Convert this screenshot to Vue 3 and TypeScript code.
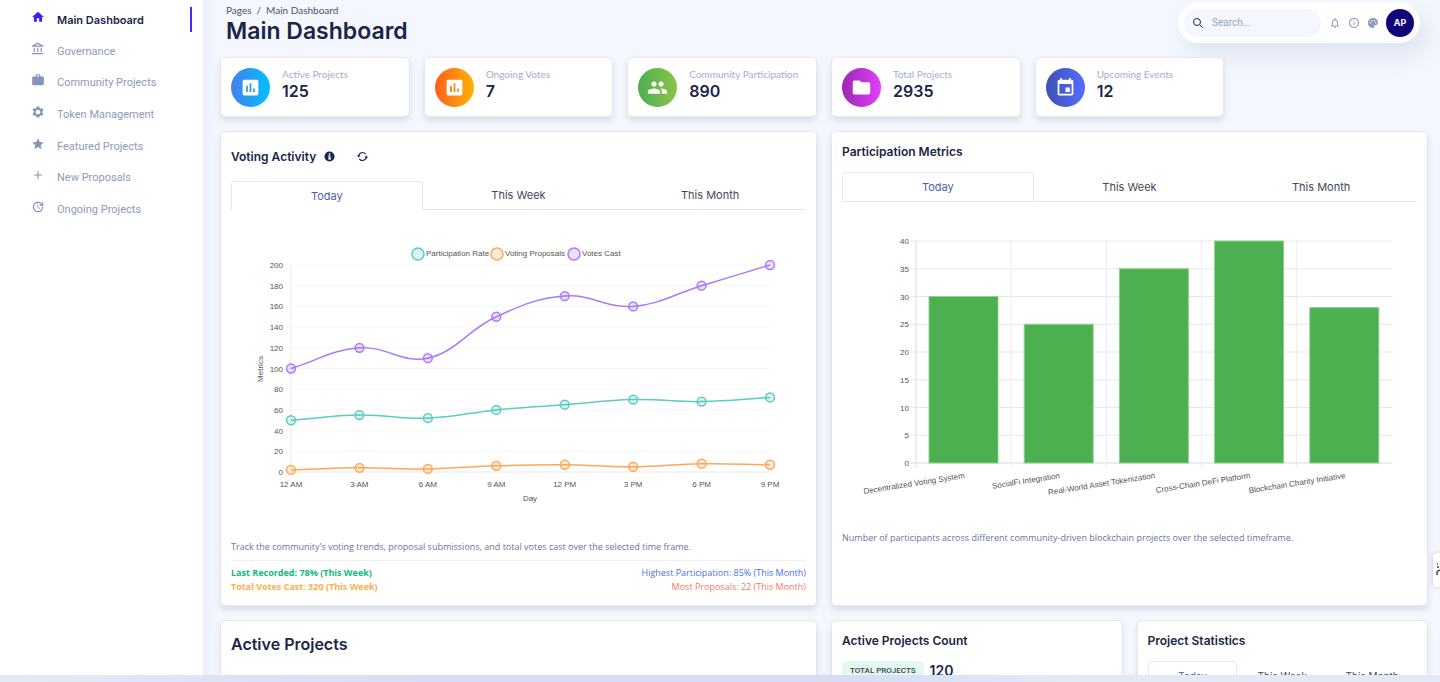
<script setup lang="ts">
import { ref } from 'vue'

interface NavItem { label: string; icon: string }
interface Stat { label: string; value: string; tone: string; icon: string }
interface Point { x: number; y: number }

const pollIcon =
  'M19 3H5c-1.1 0-2 .9-2 2v14c0 1.1.9 2 2 2h14c1.1 0 2-.9 2-2V5c0-1.1-.9-2-2-2zM9 17H7v-7h2v7zm4 0h-2V7h2v10zm4 0h-2v-4h2v4z'

const navItems: NavItem[] = [
  { label: 'Main Dashboard', icon: 'M10 20v-6h4v6h5v-8h3L12 3 2 12h3v8z' },
  { label: 'Governance', icon: 'M6.5 10h-2v7h2v-7zm6 0h-2v7h2v-7zm8.500 9H2v2h19v-2zm-2.500-9h-2v7h2v-7zm-7-6.740L16.710 6H6.290l5.210-2.740m0-2.260L2 6v2h19V6l-9.500-5z' },
  { label: 'Community Projects', icon: 'M20 6h-4V4c0-1.110-.890-2-2-2h-4c-1.110 0-2 .890-2 2v2H4c-1.110 0-1.990.890-1.990 2L2 19c0 1.110.890 2 2 2h16c1.110 0 2-.890 2-2V8c0-1.110-.890-2-2-2zm-6 0h-4V4h4v2z' },
  { label: 'Token Management', icon: 'M19.14 12.94c.04-.3.06-.61.06-.94 0-.32-.02-.64-.07-.94l2.030-1.580c.18-.14.23-.41.12-.61l-1.920-3.320c-.12-.22-.37-.29-.59-.22l-2.390.96c-.5-.38-1.030-.7-1.620-.94l-.36-2.540c-.04-.24-.24-.41-.48-.41h-3.840c-.24 0-.43.17-.47.41l-.36 2.540c-.59.24-1.130.57-1.620.94l-2.390-.96c-.22-.08-.47 0-.59.22L2.740 8.870c-.12.21-.08.47.12.61l2.030 1.580c-.05.3-.09.63-.09.94s.02.64.07.94l-2.030 1.580c-.18.14-.23.41-.12.61l1.920 3.320c.12.22.37.29.59.22l2.390-.96c.5.38 1.030.7 1.620.94l.36 2.540c.05.24.24.41.48.41h3.840c.24 0 .44-.17.47-.41l.36-2.540c.59-.24 1.130-.56 1.620-.94l2.390.96c.22.08.47 0 .59-.22l1.920-3.320c.12-.22.07-.47-.12-.61l-2.010-1.580zM12 16c-2.200 0-4-1.800-4-4s1.800-4 4-4 4 1.800 4 4-1.800 4-4 4z' },
  { label: 'Featured Projects', icon: 'M12 17.270L18.180 21l-1.640-7.030L22 9.240l-7.190-.61L12 2 9.190 8.630 2 9.240l5.460 4.730L5.820 21z' },
  { label: 'New Proposals', icon: 'M19 13h-6v6h-2v-6H5v-2h6V5h2v6h6v2z' },
  { label: 'Ongoing Projects', icon: 'M21 10.120h-6.780l2.740-2.820c-2.730-2.700-7.150-2.800-9.880-.1-2.730 2.710-2.730 7.080 0 9.790s7.150 2.710 9.880 0C18.320 15.650 19 14.080 19 12.100h2c0 1.980-.88 4.550-2.640 6.290-3.510 3.480-9.210 3.480-12.720 0-3.500-3.470-3.530-9.110-.02-12.580s9.140-3.470 12.650 0L21 3v7.120zM12.500 8v4.250l3.500 2.080-.72 1.210L11 13V8h1.500z' },
]

const stats: Stat[] = [
  { label: 'Active Projects', value: '125', tone: 'blue', icon: pollIcon },
  { label: 'Ongoing Votes', value: '7', tone: 'orange', icon: pollIcon },
  { label: 'Community Participation', value: '890', tone: 'green', icon: 'M16 11c1.660 0 2.990-1.340 2.990-3S17.660 5 16 5c-1.660 0-3 1.340-3 3s1.340 3 3 3zm-8 0c1.660 0 2.990-1.340 2.990-3S9.660 5 8 5C6.340 5 5 6.340 5 8s1.340 3 3 3zm0 2c-2.330 0-7 1.170-7 3.500V19h14v-2.500c0-2.330-4.670-3.500-7-3.500zm8 0c-.29 0-.62.02-.97.05 1.160.84 1.970 1.970 1.970 3.450V19h6v-2.500c0-2.330-4.670-3.500-7-3.500z' },
  { label: 'Total Projects', value: '2935', tone: 'purple', icon: 'M10 4H4c-1.100 0-1.990.9-1.990 2L2 18c0 1.100.9 2 2 2h16c1.100 0 2-.9 2-2V8c0-1.100-.9-2-2-2h-8l-2-2z' },
  { label: 'Upcoming Events', value: '12', tone: 'indigo', icon: 'M17 12h-5v5h5v-5zM16 1v2H8V1H6v2H5c-1.110 0-1.990.9-1.990 2L3 19c0 1.100.89 2 2 2h14c1.100 0 2-.9 2-2V5c0-1.100-.9-2-2-2h-1V1h-2zm3 18H5V8h14v11z' },
]

const tabs = ['Today', 'This Week', 'This Month']
const votingTab = ref('Today')
const metricsTab = ref('Today')
const statisticsTab = ref('Today')
const query = ref('')

// Voting activity line chart
const line = { left: 60, right: 539, top: 55, bottom: 262 }
const hours = ['12 AM', '3 AM', '6 AM', '9 AM', '12 PM', '3 PM', '6 PM', '9 PM']
const lineTicks = Array.from({ length: 11 }, (_, i) => i * 20)
const lineX = (i: number) => line.left + (i * (line.right - line.left)) / (hours.length - 1)
const lineY = (v: number) => line.bottom - (v * (line.bottom - line.top)) / 200

const series = [
  { name: 'Participation Rate', color: '#5ccbc3', fill: 'rgba(75,192,192,0.2)', legendX: 187, values: [50, 55, 52, 60, 65, 70, 68, 72] },
  { name: 'Voting Proposals', color: '#ffa755', fill: 'rgba(255,159,64,0.2)', legendX: 266, values: [2, 4, 3, 6, 7, 5, 8, 7] },
  { name: 'Votes Cast', color: '#a77bff', fill: 'rgba(153,102,255,0.2)', legendX: 343, values: [100, 120, 110, 150, 170, 160, 180, 200] },
].map((s) => {
  const points = s.values.map((v, i) => ({ x: lineX(i), y: lineY(v) }))
  return { ...s, points, path: smoothPath(points) }
})

function smoothPath(points: Point[], tension = 0.4): string {
  const handles = points.map((p, i) => {
    const prev = points[i - 1] ?? p
    const next = points[i + 1] ?? p
    const before = Math.hypot(p.x - prev.x, p.y - prev.y)
    const after = Math.hypot(next.x - p.x, next.y - p.y)
    const a = (tension * before) / (before + after)
    const b = (tension * after) / (before + after)
    const dx = next.x - prev.x
    const dy = next.y - prev.y
    return { inX: p.x - a * dx, inY: p.y - a * dy, outX: p.x + b * dx, outY: p.y + b * dy }
  })
  return points.reduce((d, p, i) => {
    if (i === 0) return `M${p.x} ${p.y}`
    const from = handles[i - 1]
    const to = handles[i]
    return `${d} C${from.outX} ${from.outY} ${to.inX} ${to.inY} ${p.x} ${p.y}`
  }, '')
}

// Participation bar chart
const bar = { left: 74, right: 550, top: 39, bottom: 261 }
const barTicks = [0, 5, 10, 15, 20, 25, 30, 35, 40]
const projects = [
  { name: 'Decentralized Voting System', value: 30 },
  { name: 'SocialFi Integration', value: 25 },
  { name: 'Real-World Asset Tokenization', value: 35 },
  { name: 'Cross-Chain DeFi Platform', value: 40 },
  { name: 'Blockchain Charity Initiative', value: 28 },
]
const step = (bar.right - bar.left) / projects.length
const barY = (v: number) => bar.bottom - (v * (bar.bottom - bar.top)) / 40
</script>

<template>
  <div class="app">
    <aside class="sidebar">
      <nav aria-label="Main">
        <ul class="nav-list">
          <li v-for="(item, i) in navItems" :key="item.label">
            <a href="#" class="nav-link" :class="{ active: i === 0 }">
              <svg class="nav-icon" viewBox="0 0 24 24" aria-hidden="true"><path :d="item.icon" /></svg>
              <span>{{ item.label }}</span>
            </a>
          </li>
        </ul>
      </nav>
    </aside>

    <main class="main">
      <header class="top">
        <div class="heading">
          <nav class="crumbs" aria-label="Breadcrumb">
            <a href="#">Pages</a><span>/</span><a href="#">Main Dashboard</a>
          </nav>
          <h1>Main Dashboard</h1>
        </div>
        <div class="toolbar">
          <label class="search">
            <svg viewBox="0 0 24 24" aria-hidden="true"><circle cx="10" cy="10" r="7" /><path d="M15.500 15.500L21.500 21.500" /></svg>
            <input v-model="query" type="text" placeholder="Search..." aria-label="Search" />
          </label>
          <button type="button" class="tool" aria-label="Notifications">
            <svg viewBox="0 0 24 24"><path d="M12 22c1.100 0 2-.9 2-2h-4c0 1.100.9 2 2 2zm6-6v-5c0-3.070-1.630-5.640-4.500-6.320V4c0-.83-.67-1.500-1.500-1.500s-1.500.67-1.500 1.500v.68C7.640 5.360 6 7.920 6 11v5l-2 2v1h16v-1l-2-2zm-2 1H8v-6c0-2.480 1.510-4.500 4-4.500s4 2.020 4 4.500v6z" /></svg>
          </button>
          <button type="button" class="tool" aria-label="Information">
            <svg viewBox="0 0 24 24"><path d="M11 7h2v2h-2zm0 4h2v6h-2zm1-9C6.480 2 2 6.480 2 12s4.480 10 10 10 10-4.480 10-10S17.520 2 12 2zm0 18c-4.410 0-8-3.590-8-8s3.590-8 8-8 8 3.590 8 8-3.590 8-8 8z" /></svg>
          </button>
          <button type="button" class="tool" aria-label="Theme">
            <svg viewBox="0 0 24 24"><path d="M12 2C6.490 2 2 6.490 2 12s4.490 10 10 10c1.380 0 2.500-1.120 2.500-2.500 0-.61-.23-1.200-.64-1.670-.08-.1-.13-.21-.13-.33 0-.28.22-.5.5-.5H16c3.310 0 6-2.690 6-6 0-4.960-4.490-9-10-9zm5.500 11c-.83 0-1.500-.67-1.500-1.500s.67-1.500 1.500-1.500 1.500.67 1.500 1.500-.67 1.500-1.500 1.500zm-3-4c-.83 0-1.500-.67-1.500-1.500S13.670 6 14.500 6s1.500.67 1.500 1.500S15.330 9 14.500 9zM5 11.500c0-.83.67-1.500 1.500-1.500s1.500.67 1.500 1.500S7.330 13 6.500 13 5 12.330 5 11.500zm6-4c0 .83-.67 1.500-1.500 1.500S8 8.330 8 7.500 8.670 6 9.500 6s1.500.67 1.500 1.500z" /></svg>
          </button>
          <button type="button" class="avatar">AP</button>
        </div>
      </header>

      <section class="stats" aria-label="Summary">
        <article v-for="s in stats" :key="s.label" class="card stat">
          <span class="badge" :class="s.tone">
            <svg viewBox="0 0 24 24" aria-hidden="true"><path :d="s.icon" /></svg>
          </span>
          <div class="stat-text">
            <p class="stat-label">{{ s.label }}</p>
            <p class="stat-value">{{ s.value }}</p>
          </div>
        </article>
      </section>

      <section class="columns">
        <article class="card panel">
          <div class="panel-head tall">
            <h2>Voting Activity</h2>
            <button type="button" class="head-button" aria-label="About voting activity">
              <svg viewBox="0 0 24 24"><circle cx="12" cy="12" r="11" fill="#1b2547" /><path d="M10.500 5h3.400v3h-3.400zM9 10h5v6h1.500v2.500H9V16h1.500v-3.500H9z" fill="#fff" /></svg>
            </button>
            <button type="button" class="head-button refresh" aria-label="Refresh">
              <svg viewBox="0 0 24 24" fill="none" stroke="#1b2547" stroke-width="2.500"><path d="M3.500 11a8.600 8.600 0 0 1 15.500-4M20.500 13a8.600 8.600 0 0 1-15.500 4" /><path d="M0 9.500h7.500L3.700 14.500zM24 14.500h-7.500l3.800-5z" fill="#1b2547" stroke="none" /></svg>
            </button>
          </div>
          <div class="tabs open" role="tablist">
            <button v-for="t in tabs" :key="t" type="button" role="tab" :aria-selected="t === votingTab" :class="{ selected: t === votingTab }" @click="votingTab = t">{{ t }}</button>
          </div>
          <svg class="chart" viewBox="0 0 575 327" role="img" aria-label="Voting activity by hour">
            <g v-for="s in series" :key="s.name">
              <circle :cx="s.legendX" cy="44" r="6" :fill="s.fill" :stroke="s.color" stroke-width="1.500" />
              <text :x="s.legendX + 8" y="46">{{ s.name }}</text>
            </g>
            <g v-for="t in lineTicks" :key="t">
              <line :x1="line.left - 5" :x2="line.right" :y1="lineY(t)" :y2="lineY(t)" :stroke="t ? '#f6f6f7' : '#e9e9eb'" />
              <text :x="line.left - 8" :y="lineY(t) + 3" text-anchor="end">{{ t }}</text>
            </g>
            <line :x1="line.left" :x2="line.left" :y1="line.top" :y2="line.bottom" stroke="#ececee" />
            <text v-for="(h, i) in hours" :key="h" :x="lineX(i)" y="277" text-anchor="middle">{{ h }}</text>
            <text x="299" y="291" text-anchor="middle">Day</text>
            <text transform="translate(32 159) rotate(-90)" text-anchor="middle">Metrics</text>
            <g v-for="s in series" :key="s.name + '-line'" :stroke="s.color" stroke-width="1.500">
              <path :d="s.path" fill="none" />
              <circle v-for="(p, i) in s.points" :key="i" :cx="p.x" :cy="p.y" r="4.400" :fill="s.fill" />
            </g>
          </svg>
          <p class="caption">Track the community's voting trends, proposal submissions, and total votes cast over the selected time frame.</p>
          <div class="summary">
            <p class="good">Last Recorded: 78% (This Week)</p>
            <p class="info">Highest Participation: 85% (This Month)</p>
            <p class="warm">Total Votes Cast: 320 (This Week)</p>
            <p class="alert">Most Proposals: 22 (This Month)</p>
          </div>
        </article>

        <article class="card panel">
          <div class="panel-head"><h2>Participation Metrics</h2></div>
          <div class="tabs" role="tablist">
            <button v-for="t in tabs" :key="t" type="button" role="tab" :aria-selected="t === metricsTab" :class="{ selected: t === metricsTab }" @click="metricsTab = t">{{ t }}</button>
          </div>
          <svg class="chart" viewBox="0 0 575 326" role="img" aria-label="Participants per project">
            <g v-for="t in barTicks" :key="t">
              <line :x1="bar.left - 6" :x2="bar.right" :y1="barY(t)" :y2="barY(t)" :stroke="t ? '#e8e8e8' : '#d9d9d9'" />
              <text :x="bar.left - 7" :y="barY(t) + 3" text-anchor="end">{{ t }}</text>
            </g>
            <g v-for="(p, i) in projects" :key="p.name">
              <line :x1="bar.left + i * step" :x2="bar.left + i * step" :y1="bar.top" :y2="bar.bottom + 5" :stroke="i ? '#ececec' : '#dcdcdc'" />
              <rect :x="bar.left + i * step + 13" :y="barY(p.value)" width="69" :height="bar.bottom - barY(p.value)" fill="#4caf50" stroke="#8fcf93" />
              <text :transform="`translate(${bar.left + i * step + 49} 276) rotate(-9)`" text-anchor="end">{{ p.name }}</text>
            </g>
          </svg>
          <p class="caption">Number of participants across different community-driven blockchain projects over the selected timeframe.</p>
        </article>
      </section>

      <section class="columns">
        <article class="card panel lower">
          <div class="panel-head large"><h2>Active Projects</h2></div>
        </article>
        <div class="columns">
          <article class="card panel lower">
            <div class="panel-head"><h2>Active Projects Count</h2></div>
            <p class="count"><span class="pill">TOTAL PROJECTS</span><strong>120</strong></p>
          </article>
          <article class="card panel lower">
            <div class="panel-head"><h2>Project Statistics</h2></div>
            <div class="tabs small" role="tablist">
              <button v-for="t in tabs" :key="t" type="button" role="tab" :aria-selected="t === statisticsTab" :class="{ selected: t === statisticsTab }" @click="statisticsTab = t">{{ t }}</button>
            </div>
          </article>
        </div>
      </section>
    </main>

    <button type="button" class="side-widget" aria-label="Quick tools">
      <svg viewBox="0 0 12 14" aria-hidden="true"><path d="M1 4h2M1 1h1M1 12V9q1-2 5-2" fill="none" stroke="#444" stroke-width="1.500" /></svg>
    </button>
    <div class="bottom-strip"></div>
  </div>
</template>

<style>
body {
  margin: 0;
  overflow: hidden;
  background: #f4f7fe;
}
</style>

<style scoped>
.app {
  --text: Lato, "Liberation Sans", sans-serif;
  display: flex;
  height: 100vh;
  overflow: hidden;
  font-family: Inter, "Liberation Sans", sans-serif;
  color: #1b2547;
}
h1, h2, p, ul { margin: 0; padding: 0; }
button { font: inherit; color: inherit; border: 0; padding: 0; background: none; cursor: pointer; }
a { color: inherit; text-decoration: none; }
svg { display: block; }

.sidebar { flex: 0 0 203px; background: #fff; }
.nav-list { list-style: none; display: grid; grid-auto-rows: 1fr; height: 221px; padding-top: 4px; }
.nav-list li { display: grid; }
.nav-link {
  display: flex;
  align-items: center;
  gap: 12px;
  padding-left: 31px;
  margin-right: 11px;
  font-family: Roboto, sans-serif;
  font-size: 11px;
  color: #8d9bbb;
}
.nav-icon { width: 14px; height: 14px; margin-bottom: 5px; fill: #8496b6; }
.nav-link.active { color: #1b2547; font-family: Inter, sans-serif; font-size: 11px; font-weight: 600; border-right: 2px solid #422afb; height: 25px; margin-top: 3px; }
.active .nav-icon { fill: #3a1ff5; }

.main {
  flex: 1;
  min-width: 0;
  display: flex;
  flex-direction: column;
  gap: 14px;
  padding: 2px 12px 0 17px;
  background: linear-gradient(90deg, #ebeff8, #f4f7fe 16px);
}
.main > * { flex-shrink: 0; }
.top { display: flex; justify-content: space-between; align-items: flex-start; padding: 0 8px 0 6px; height: 41px; }
.heading { padding-top: 1px; }
.crumbs { display: flex; gap: 5px; font-family: var(--text); font-size: 10px; line-height: 14px; color: #4b5268; }
h1 { font-size: 23px; line-height: 28px; font-weight: 600; }
.toolbar {
  display: flex;
  align-items: center;
  gap: 7px;
  height: 41px;
  box-sizing: border-box;
  padding: 0 6px;
  border-radius: 21px;
  background: #fff;
  box-shadow: 8px 12px 24px rgba(112, 144, 176, 0.18);
}
.search { display: flex; align-items: center; gap: 8px; width: 129px; height: 28px; padding-left: 8px; margin-right: 1px; border-radius: 14px; background: #f4f7fe; }
.search svg { width: 12px; height: 12px; fill: none; stroke: #1b2547; stroke-width: 2; }
.search input { width: 90px; border: 0; padding: 0; outline: 0; background: none; font: 10px Roboto, sans-serif; color: #1b2547; }
.search input::placeholder { color: #9aa3b8; opacity: 1; }
.tool svg { width: 12px; height: 12px; fill: #8f9bba; }
.avatar { width: 28px; height: 28px; border-radius: 50%; background: #11047a; color: #fff; font-size: 9px; font-weight: 700; }

.card { box-sizing: border-box; background: #fff; border: 1px solid #e3e9f4; border-radius: 5px; box-shadow: 0 4px 6px rgba(0, 0, 0, 0.1); }
.stats { display: grid; grid-template-columns: repeat(6, 1fr); gap: 14px; }
.stat { display: flex; align-items: center; gap: 12px; height: 60px; padding-left: 10px; }
.stat-text { padding-bottom: 6px; }
.badge { display: grid; place-items: center; width: 39px; height: 39px; border-radius: 50%; }
.badge svg { width: 21px; height: 21px; fill: #fff; }
.blue { background: linear-gradient(90deg, #4481eb, #04befe); }
.orange { background: linear-gradient(90deg, #ff5f1c, #ffb406); }
.green { background: linear-gradient(90deg, #4caf50, #8bc34a); }
.purple { background: linear-gradient(90deg, #9c27b0, #e040fb); }
.indigo { background: linear-gradient(90deg, #3f51b5, #536dfe); }
.stat-label { font-family: var(--text); font-size: 10px; line-height: 14px; color: #a3aed0; }
.stat-value { font-size: 16px; line-height: 20px; font-weight: 600; }

.columns { display: grid; grid-template-columns: repeat(2, minmax(0, 1fr)); gap: 14px; }
.panel { padding: 0 10px 11px; }
.panel-head { display: flex; align-items: center; height: 40px; }
.panel-head.tall { height: 49px; }
.panel-head.large { height: 46px; }
h2 { font-size: 12px; line-height: 16px; font-weight: 600; }
.large h2 { font-size: 16px; line-height: 20px; }
.head-button { margin-left: 8px; }
.head-button svg { width: 11px; height: 11px; }
.head-button.refresh { margin-left: 22px; }

.tabs { display: flex; height: 29px; border-bottom: 1px solid #e2e8f3; }
.tabs button { flex: 1; border: 1px solid transparent; border-radius: 4px 4px 0 0; font-size: 11px; color: #3f4758; }
.tabs button.selected { border-color: #e2e8f3; border-bottom: 0; color: #4762a5; }
.tabs.open { height: 28px; }
.tabs.open .selected { margin-bottom: -1px; background: #fff; }
.tabs.small button { font-size: 10px; }

.chart { width: 100%; height: auto; }
.chart text { font-family: "Liberation Sans", Arial, sans-serif; font-size: 8px; fill: #555; }
.caption { font-family: "Open Sans", sans-serif; font-size: 9px; line-height: 20px; color: #68769a; white-space: nowrap; overflow: hidden; }
.summary { display: grid; grid-template-columns: 1fr auto; margin-top: 3px; padding-top: 5px; border-top: 1px solid #eef0f4; font-family: "Open Sans", sans-serif; font-size: 9px; line-height: 14px; }
.summary p:nth-child(even) { text-align: right; }
.good { color: #10b981; font-weight: 700; }
.warm { color: #ffae4c; font-weight: 700; }
.info { color: #4a72ef; }
.alert { color: #f47b5f; }

.lower { height: 96px; }
.count { display: flex; align-items: center; gap: 6px; }
.pill { padding: 0 8px; border-radius: 5px; background: #e3f8f0; color: #36454f; font-family: Roboto, sans-serif; font-size: 8px; line-height: 20px; font-weight: 500; }
.count strong { font-size: 14px; line-height: 20px; font-weight: 600; }

.side-widget { position: fixed; right: 0; top: 553px; width: 7px; height: 34px; overflow: hidden; border-radius: 4px 0 0 4px; background: #fff; box-shadow: 0 0 4px rgba(0, 0, 0, 0.2); }
.side-widget svg { width: 12px; height: 14px; margin-left: 3px; }
.bottom-strip { position: fixed; left: 0; right: 0; bottom: 0; height: 7px; background: linear-gradient(90deg, #e1ebf8, #d5def4 30%, #d5def4 60%, #e1ebf8 75%); }
</style>
